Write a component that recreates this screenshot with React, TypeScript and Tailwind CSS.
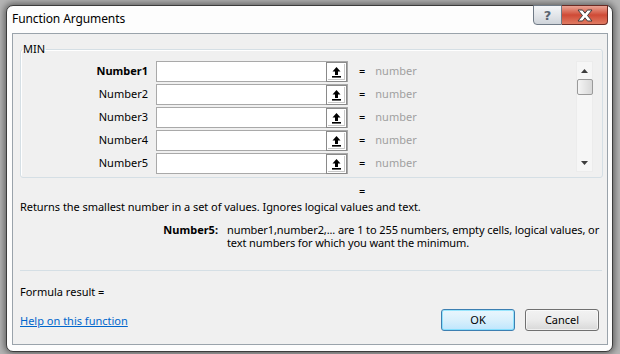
import React from "react";

const font = { fontFamily: '"Noto Sans", "Liberation Sans", sans-serif' };

function PickButton() {
  return (
    <div className="w-[21px] h-[20px] border border-[#8a8a8a] bg-white flex items-center justify-center shadow-[inset_0_0_0_1px_#ffffff,inset_-1px_-1px_0_1px_#c8c8c8]">
      <svg width="11" height="12" viewBox="0 0 11 12">
        <path d="M5.5 1 L1.5 5.5 H4 V9 H7 V5.5 H9.5 Z" fill="#000" />
        <rect x="1" y="10" width="9" height="1.6" fill="#000" />
      </svg>
    </div>
  );
}

function ArgRow({ label, bold }: { label: string; bold?: boolean }) {
  return (
    <div className="flex items-center h-[21px]">
      <div className={`w-[127px] text-right text-[11px] text-black ${bold ? "font-bold" : ""}`}>{label}</div>
      <div className="ml-[8px] w-[192px] h-[21px] border border-[#a9a9a9] bg-white flex justify-end">
        <PickButton />
      </div>
      <div className="ml-[11px] text-[11px] text-black">=</div>
      <div className="ml-[10px] text-[11px] text-[#a0a0a0]">number</div>
    </div>
  );
}

export default function App() {
  return (
    <div
      className="w-[620px] h-[354px] bg-[#b4b4b4] pt-[5px] pl-[6px] overflow-hidden"
      style={font}
    >
      <div className="relative w-[607px] h-[347px] rounded-[7px] border border-[#3c3c3c] bg-[#fdfdfd] shadow-[0_0_6px_2px_rgba(0,0,0,0.45)] flex flex-col">
        {/* title bar */}
        <div className="h-[27px] flex items-start">
          <div className="pl-[5px] pt-[5px] text-[12px] text-black leading-[16px] tracking-[-0.1px]">Function Arguments</div>
          <div className="ml-auto mr-[4px] -mt-[1px] flex">
            <div className="w-[29px] h-[20px] border border-[#6f7a86] rounded-bl-[4px] bg-gradient-to-b from-[#f4f6f8] via-[#e3e6ea] to-[#cfd4da] flex items-center justify-center">
              <span className="text-[13px] font-bold text-[#5a6470] leading-none" style={{ fontFamily: '"DejaVu Sans", sans-serif' }}>?</span>
            </div>
            <div className="w-[46px] h-[20px] border border-l-0 border-[#6a2b24] rounded-br-[4px] bg-gradient-to-b from-[#e8a394] via-[#cf4a36] to-[#e07a62] flex items-center justify-center">
              <svg width="18" height="13" viewBox="0 0 18 13">
                <path d="M2 1 L6.5 1 L9 4.2 L11.5 1 L16 1 L11.5 6.5 L16 12 L11.5 12 L9 8.8 L6.5 12 L2 12 L6.5 6.5 Z" fill="#ffffff" stroke="#3f3f3f" strokeWidth="1" strokeLinejoin="round" />
              </svg>
            </div>
          </div>
        </div>

        {/* client area */}
        <div className="ml-[5px] mr-[4px] mb-[6px] flex-1 border border-[#9aa3ab] bg-[#f0f0f0] flex flex-col px-[7px]">
          <fieldset className="mt-[8px] w-[583px] h-[136px] border border-[#d5dfe5] rounded-[3px] px-0 pt-[4px] shadow-[inset_1px_1px_0_#ffffff]">
            <legend className="ml-[1px] px-[1px] text-[11px] leading-[14px] text-black">MIN</legend>
            <div className="flex">
              <div className="flex flex-col gap-[2px] pt-[1px]">
                <ArgRow label="Number1" bold />
                <ArgRow label="Number2" />
                <ArgRow label="Number3" />
                <ArgRow label="Number4" />
                <ArgRow label="Number5" />
              </div>
              <div className="ml-auto mr-[9px] mt-[1px] w-[17px] h-[111px] bg-[#f6f6f6] border border-[#ececec] flex flex-col items-center">
                <div className="h-[17px] flex items-center justify-center">
                  <svg width="7" height="4" viewBox="0 0 7 4"><path d="M0 4 L3.5 0 L7 4 Z" fill="#3d3d3d" /></svg>
                </div>
                <div className="w-[16px] h-[16px] border border-[#9a9a9a] rounded-[2px] bg-gradient-to-r from-[#f4f4f4] via-[#e6e6e6] to-[#d8d8d8]" />
                <div className="flex-1" />
                <div className="h-[17px] flex items-center justify-center">
                  <svg width="7" height="4" viewBox="0 0 7 4"><path d="M0 0 L3.5 4 L7 0 Z" fill="#3d3d3d" /></svg>
                </div>
              </div>
            </div>
          </fieldset>

          <div className="mt-[5px] pl-[339px] text-[11px] leading-[15px] text-black">=</div>
          <div className="mt-[1px] text-[11px] leading-[15px] text-black tracking-[-0.05px]">
            Returns the smallest number in a set of values. Ignores logical values and text.
          </div>
          <div className="mt-[9px] flex text-[11px] leading-[13px] text-black">
            <div className="w-[198px] shrink-0 text-right font-bold">Number5:</div>
            <div className="ml-[9px] w-[376px] shrink-0 tracking-[-0.1px]">
              number1,number2,... are 1 to 255 numbers, empty cells, logical values, or text numbers for which you want the minimum.
            </div>
          </div>

          <div className="mt-[21px] h-px w-[582px] bg-[#d5dfe5]" />
          <div className="mt-[13px] text-[11px] leading-[15px] text-black">Formula result =</div>
          <div className="mt-[10px] flex items-center">
            <div className="text-[11px] leading-[15px] text-[#0066cc] underline">Help on this function</div>
            <div className="ml-auto mr-[1px] flex gap-[10px]">
              <div className="w-[74px] h-[22px] rounded-[3px] border border-[#3c7fb1] bg-gradient-to-b from-[#eaf6fd] via-[#d9f0fc] to-[#bee6fd] shadow-[inset_0_0_0_1px_#48d5fd80] flex items-center justify-center text-[11px] text-black">OK</div>
              <div className="w-[74px] h-[22px] rounded-[3px] border border-[#707070] bg-gradient-to-b from-[#f2f2f2] via-[#ebebeb] to-[#d8d8d8] shadow-[inset_0_0_0_1px_#ffffff99] flex items-center justify-center text-[11px] text-black">Cancel</div>
            </div>
          </div>
        </div>
      </div>
    </div>
  );
}
